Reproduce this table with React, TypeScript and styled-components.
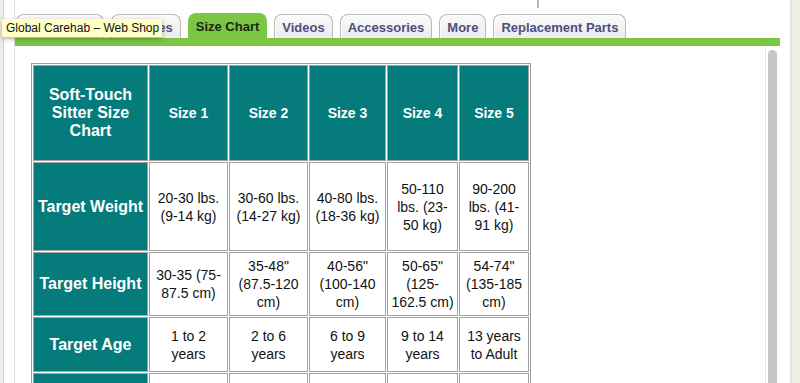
import React from "react";
import styled, { createGlobalStyle } from "styled-components";

const Global = createGlobalStyle`
  html, body { margin: 0; padding: 0; background: #ffffff; overflow: hidden; }
  * { box-sizing: border-box; }
`;

const Page = styled.div`
  position: relative;
  display: flex;
  height: 383px;
  width: 800px;
  overflow: hidden;
  background: #ffffff;
  font-family: "Liberation Sans", Arial, Helvetica, sans-serif;
`;

const EdgeStrip = styled.div`
  flex: none;
  width: 4px;
  background: #ececec;
  border-right: 1px solid #cfcfcf;
`;

const Spacer = styled.div<{ $w: number }>`
  flex: none;
  width: ${(p) => p.$w}px;
`;

const Main = styled.div`
  flex: none;
  width: 766px;
  display: flex;
  flex-direction: column;
  border-left: 1px solid #dedede;
`;

const TabRow = styled.div`
  position: relative;
  height: 38px;
  display: flex;
  align-items: flex-end;
  gap: 7px;
  padding-left: 1px;
`;

const Tab = styled.div<{ $active?: boolean }>`
  height: ${(p) => (p.$active ? 25 : 24)}px;
  padding: 1px 7px 0;
  display: flex;
  align-items: center;
  border: 1px solid ${(p) => (p.$active ? "#7bc744" : "#b9b9b9")};
  border-bottom: none;
  border-radius: 8px 8px 0 0;
  background: ${(p) =>
    p.$active ? "#7bc744" : "linear-gradient(#fafafa, #ececec)"};
  box-shadow: ${(p) => (p.$active ? "none" : "inset 1px 1px 0 #ffffff")};
  color: ${(p) => (p.$active ? "#1d2614" : "#4c4e80")};
  font-size: 13px;
  font-weight: bold;
  white-space: nowrap;
`;

const TopMark = styled.div`
  position: absolute;
  left: 522px;
  top: 0;
  width: 2px;
  height: 8px;
  background: #b8b8b8;
`;

const GreenBar = styled.div`
  height: 8px;
  background: #7bc744;
`;

const Panel = styled.div`
  flex: 1;
  display: flex;
  min-height: 0;
`;

const Content = styled.div`
  flex: 1;
  padding: 17px 0 0 16px;
`;

const ScrollTrack = styled.div`
  flex: none;
  width: 15px;
  display: flex;
  padding: 4px 3px 0 2px;
  border-left: 1px solid #e6e6e6;
`;

const ScrollThumb = styled.div`
  flex: 1;
  background: #c5c5c5;
  border-radius: 5px 5px 0 0;
`;

const RightStrip = styled.div`
  flex: 1;
  background: #edf1e8;
  border-left: 2px solid #dfe5d9;
`;

const Tooltip = styled.div`
  position: absolute;
  left: 2px;
  top: 19px;
  height: 18px;
  padding: 0 3px 0 4px;
  line-height: 18px;
  font-size: 12px;
  color: #111111;
  background: #ffffc6;
  box-shadow: 0 2px 5px rgba(0, 0, 0, 0.3);
  white-space: nowrap;
`;

const SizeTable = styled.table`
  width: 500px;
  table-layout: fixed;
  border-collapse: separate;
  border-spacing: 1px;
  border: 1px solid #9c9c9c;
  font-family: "Liberation Sans", Arial, Helvetica, sans-serif;
`;

const Row = styled.tr<{ $h: number }>`
  height: ${(p) => p.$h}px;
`;

const Cell = styled.td<{ $teal?: boolean; $big?: boolean; $w?: number }>`
  box-sizing: border-box;
  ${(p) => (p.$w ? `width: ${p.$w}px;` : "")}
  padding: 3px;
  border: 1px solid #a2a2a2;
  text-align: center;
  vertical-align: middle;
  background: ${(p) => (p.$teal ? "#067b7b" : "#ffffff")};
  color: ${(p) => (p.$teal ? "#ffffff" : "#111111")};
  font-weight: ${(p) => (p.$teal ? "bold" : "normal")};
  font-size: ${(p) => (p.$big ? 16 : 14)}px;
  line-height: 18px;
`;

const tabs = [
  "Description",
  "Features",
  "Size Chart",
  "Videos",
  "Accessories",
  "More",
  "Replacement Parts",
];

const widths = [115, 79, 79, 77, 71, 70];

const rows: { label: string; h: number; cells: string[] }[] = [
  {
    label: "Target Weight",
    h: 89,
    cells: [
      "20-30 lbs. (9-14 kg)",
      "30-60 lbs. (14-27 kg)",
      "40-80 lbs. (18-36 kg)",
      "50-110 lbs. (23-50 kg)",
      "90-200 lbs. (41-91 kg)",
    ],
  },
  {
    label: "Target Height",
    h: 64,
    cells: [
      "30-35 (75-87.5 cm)",
      '35-48" (87.5-120 cm)',
      '40-56" (100-140 cm)',
      '50-65" (125-162.5 cm)',
      '54-74" (135-185 cm)',
    ],
  },
  {
    label: "Target Age",
    h: 55,
    cells: ["1 to 2 years", "2 to 6 years", "6 to 9 years", "9 to 14 years", "13 years to Adult"],
  },
  {
    label: "",
    h: 50,
    cells: ["", "", "", "", ""],
  },
];

export default function App() {
  return (
    <>
      <Global />
      <Page>
        <EdgeStrip />
        <Spacer $w={10} />
        <Main>
          <TabRow>
            <TopMark />
            {tabs.map((t) => (
              <Tab key={t} $active={t === "Size Chart"}>
                {t}
              </Tab>
            ))}
          </TabRow>
          <GreenBar />
          <Panel>
            <Content>
              <SizeTable>
                <tbody>
                  <Row $h={96}>
                    <Cell $teal $big $w={widths[0]}>
                      Soft-Touch Sitter Size Chart
                    </Cell>
                    {[1, 2, 3, 4, 5].map((n) => (
                      <Cell key={n} $teal $w={widths[n]}>
                        Size {n}
                      </Cell>
                    ))}
                  </Row>
                  {rows.map((r, i) => (
                    <Row key={i} $h={r.h}>
                      <Cell $teal $big>
                        {r.label}
                      </Cell>
                      {r.cells.map((c, j) => (
                        <Cell key={j}>{c}</Cell>
                      ))}
                    </Row>
                  ))}
                </tbody>
              </SizeTable>
            </Content>
            <ScrollTrack>
              <ScrollThumb />
            </ScrollTrack>
          </Panel>
        </Main>
        <Spacer $w={10} />
        <RightStrip />
        <Tooltip>Global Carehab – Web Shop</Tooltip>
      </Page>
    </>
  );
}
